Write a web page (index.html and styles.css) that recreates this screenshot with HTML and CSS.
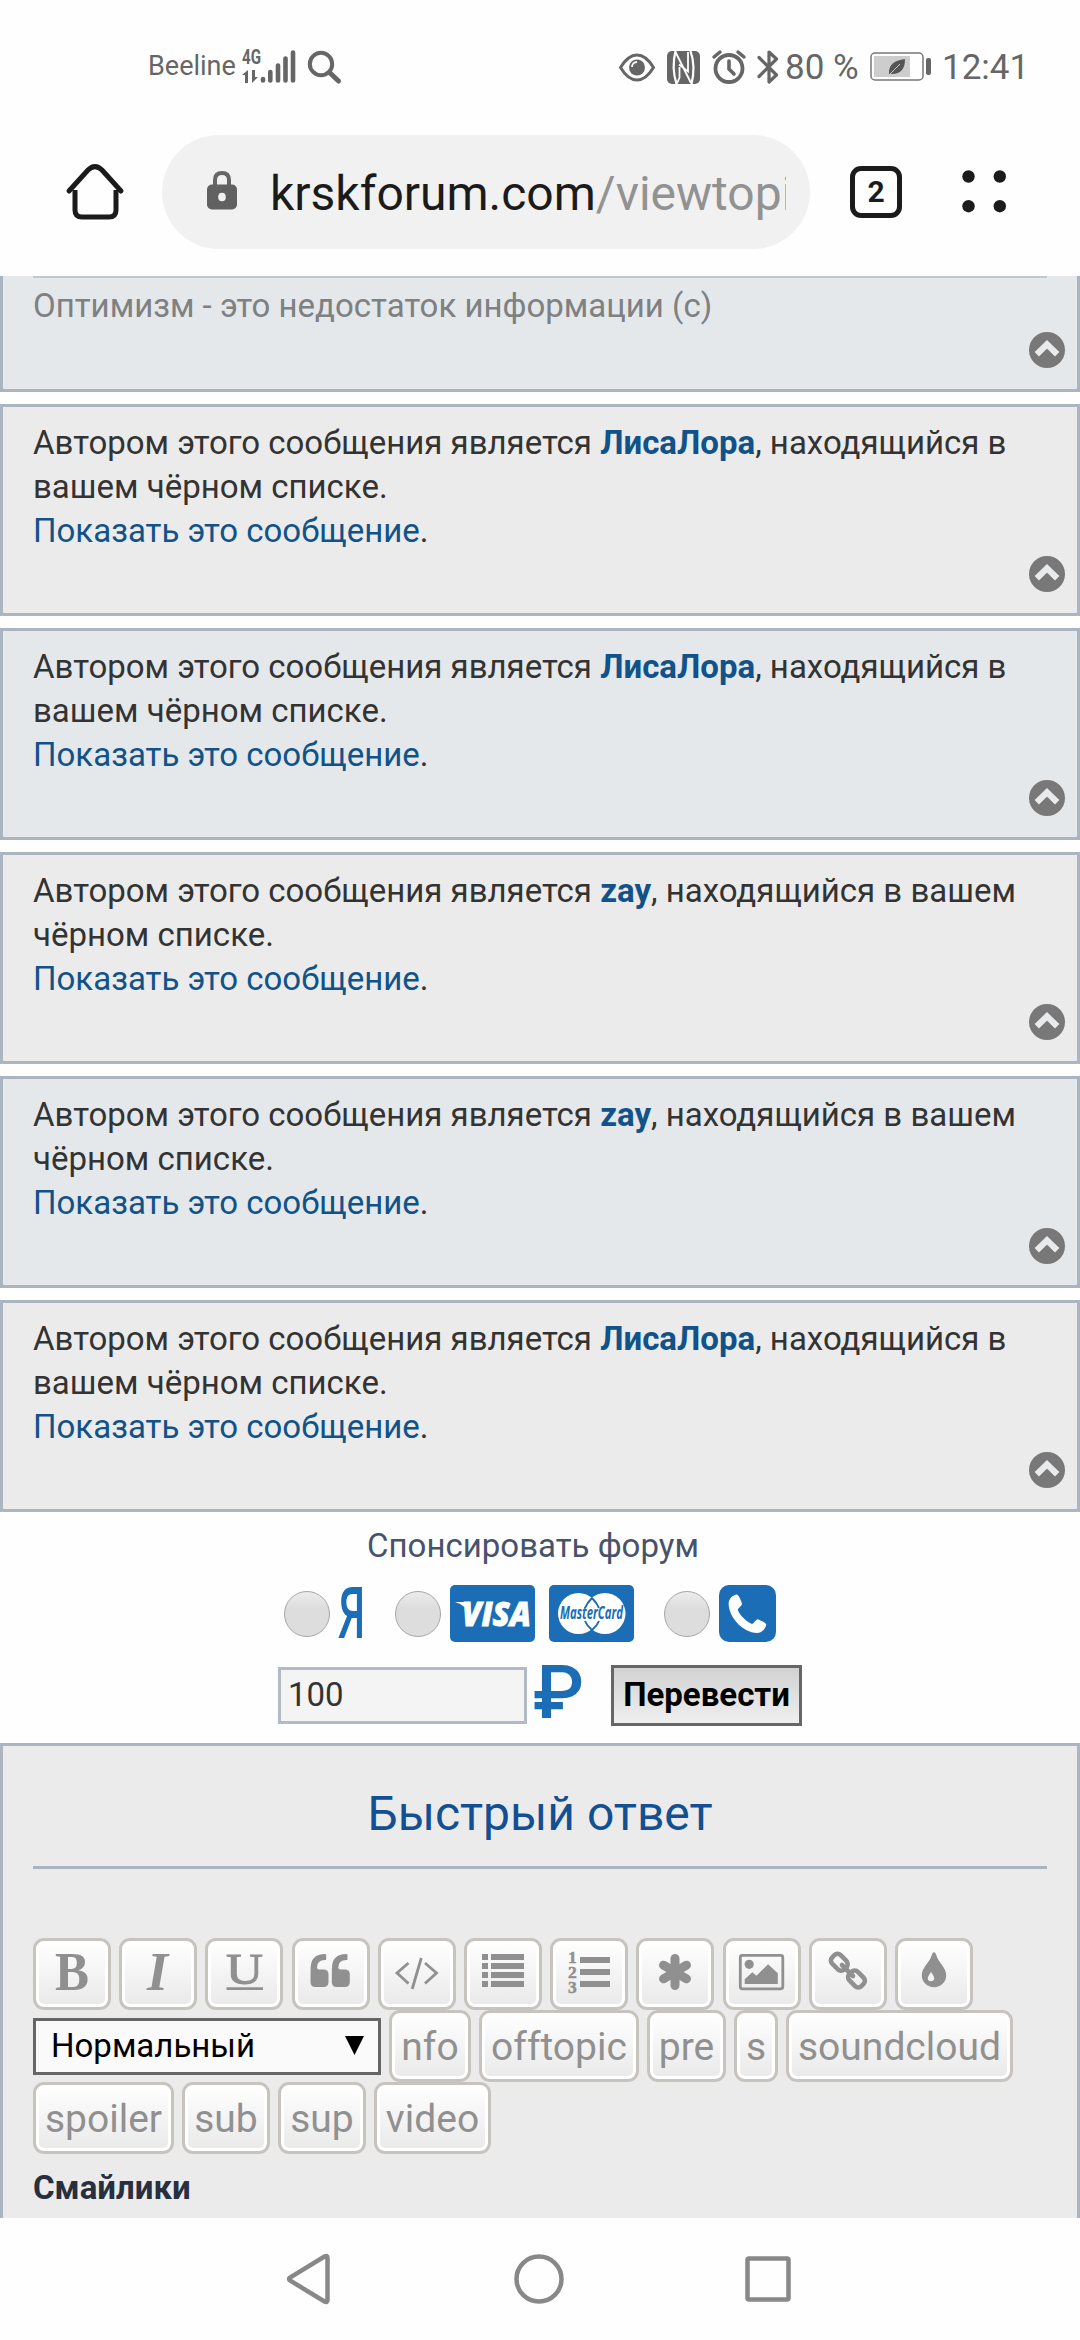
FILE: index.html
```html
<!DOCTYPE html>
<html lang="ru">
<head>
<meta charset="utf-8">
<title>krskforum.com</title>
<link rel="stylesheet" href="styles.css">
</head>
<body>
<div class="screen">
  <header class="status">
    <span class="carrier">Beeline</span>
    <svg class="signal" width="54" height="36" viewBox="0 0 54 36" fill="#666">
      <text x="0" y="15" class="net" textLength="19" lengthAdjust="spacingAndGlyphs">4G</text>
      <path d="M0 26l6-5v13H3v-8zM16 28l-6 6V21h3v7z"/>
      <g stroke="#666" stroke-width="4.6" stroke-linecap="round"><path d="M21 30v1.500M28.300 23v8.500M36 16.500v15M43.500 9.500v22M51 3.500v28"/></g>
    </svg>
    <svg class="search" width="36" height="36" viewBox="0 0 36 36" fill="none" stroke="#666"><circle cx="14" cy="15" r="11.200" stroke-width="4"/><path d="M22.500 23.500l9 8.500" stroke-width="5" stroke-linecap="round"/></svg>
    <div class="status-right">
      <svg class="eye" width="36" height="36" viewBox="0 0 36 36"><path d="M1.500 18.500Q9 6 18 6t16.500 12.500Q27 31 18 31T1.500 18.500z" fill="none" stroke="#666" stroke-width="3"/><circle cx="18" cy="18.500" r="8" fill="#666"/><path d="M13 18a5 5 0 0 1 5-5" fill="none" stroke="#fff" stroke-width="1.800"/></svg>
      <svg class="nfc" width="33" height="36" viewBox="0 0 33 36"><rect y="2" width="33" height="33" rx="5" fill="#666"/><path d="M8.500 2C6 12 6 24 9.500 35M24.500 35C27 25 27 12 23.500 2" fill="none" stroke="#fff" stroke-width="2.200"/><path d="M8.500 3L24 34M12.500 18v10.500l-2.500 6M21 3v19.500l-9-7" fill="none" stroke="#fff" stroke-width="1.800"/></svg>
      <svg class="alarm" width="34" height="36" viewBox="0 0 34 36" fill="none" stroke="#666"><circle cx="17" cy="19.500" r="13.500" stroke-width="3.800"/><path d="M17 12v8l5 5" stroke-width="3.600" stroke-linecap="round"/><path d="M2 8l6-5M32 8l-6-5" stroke-width="3.500" stroke-linecap="round"/></svg>
      <svg class="bt" width="22" height="36" viewBox="0 0 22 36" fill="none" stroke="#666" stroke-width="3.200" stroke-linecap="round" stroke-linejoin="round"><path d="M2 8.500L19.500 26 12 33V3l7.500 7L2 27.500"/></svg>
      <span class="level">80 %</span>
      <svg class="battery" width="62" height="30" viewBox="0 0 62 30"><rect x="1" y="1" width="52" height="27" rx="4" fill="none" stroke="#777" stroke-width="1.500"/><rect x="4" y="4" width="36" height="21" fill="#cdcdcd"/><path d="M19 22Q18 9 35 7q0 15-13 15z" fill="#555"/><path d="M18 24Q25 17 30 12" stroke="#cdcdcd" fill="none"/><rect x="56" y="6" width="5" height="17" rx="2" fill="#666"/></svg>
      <span class="clock">12:41</span>
    </div>
  </header>

  <nav class="browser">
    <svg class="home" width="60" height="60" viewBox="0 0 60 60" fill="none" stroke="#1b1b1b" stroke-width="5"><path d="M3 29L22 8q7-7 14 0l19 21" stroke-linecap="round"/><path d="M9 28v20q0 7 7 7h27q7 0 7-7V28"/></svg>
    <div class="omnibox">
      <svg class="lock" width="30" height="40" viewBox="0 0 30 40"><path d="M8 16v-6q0-7 7-7t7 7v6" fill="none" stroke="#666" stroke-width="4"/><rect y="14.500" width="30" height="25" rx="5" fill="#616161"/><ellipse cx="15" cy="27" rx="3.800" ry="4.300" fill="#f1f1f1"/></svg>
      <div class="url">krskforum.com<span class="path">/viewtopi</span></div>
    </div>
    <div class="tabs">2</div>
    <svg class="menu" width="45" height="43" viewBox="0 0 45 43" fill="#1b1b1b"><circle cx="6.500" cy="6.500" r="6.200"/><circle cx="37.800" cy="6.500" r="6.200"/><circle cx="6.500" cy="36.200" r="6.200"/><circle cx="37.800" cy="36.200" r="6.200"/></svg>
  </nav>

  <main class="page">
    <article class="post alt first"><p class="signature">Оптимизм - это недостаток информации (с)</p><svg class="up" viewBox="0 0 36 36"><use href="#up"/></svg></article>
    <article class="post"><p>Автором этого сообщения является <b>ЛисаЛора</b>, находящийся в<br>вашем чёрном списке.<br><a>Показать это сообщение</a>.</p><svg class="up" viewBox="0 0 36 36"><use href="#up"/></svg></article>
    <article class="post alt"><p>Автором этого сообщения является <b>ЛисаЛора</b>, находящийся в<br>вашем чёрном списке.<br><a>Показать это сообщение</a>.</p><svg class="up" viewBox="0 0 36 36"><use href="#up"/></svg></article>
    <article class="post"><p>Автором этого сообщения является <b>zay</b>, находящийся в вашем<br>чёрном списке.<br><a>Показать это сообщение</a>.</p><svg class="up" viewBox="0 0 36 36"><use href="#up"/></svg></article>
    <article class="post alt"><p>Автором этого сообщения является <b>zay</b>, находящийся в вашем<br>чёрном списке.<br><a>Показать это сообщение</a>.</p><svg class="up" viewBox="0 0 36 36"><use href="#up"/></svg></article>
    <article class="post"><p>Автором этого сообщения является <b>ЛисаЛора</b>, находящийся в<br>вашем чёрном списке.<br><a>Показать это сообщение</a>.</p><svg class="up" viewBox="0 0 36 36"><use href="#up"/></svg></article>

    <section class="sponsor">
      <div class="sponsor-title">Спонсировать форум</div>
      <div class="methods">
        <i class="radio"></i>
        <svg class="yandex" width="26" height="57" viewBox="0 0 26 57"><text x="-1" y="52.500" textLength="28" lengthAdjust="spacingAndGlyphs">Я</text></svg>
        <i class="radio"></i>
        <svg class="visa" width="85" height="57" viewBox="0 0 85 57"><rect width="85" height="57" rx="5" fill="#1b6db5"/><path d="M5 17h10q4 1 5 8l3 9Q17 20 5 17z" fill="#fff"/><text x="12" y="41" textLength="69" lengthAdjust="spacingAndGlyphs">VISA</text></svg>
        <svg class="mc" width="85" height="57" viewBox="0 0 85 57"><rect width="85" height="57" rx="5" fill="#1b6db5"/><circle cx="29.500" cy="28.500" r="20.500" fill="#fff"/><circle cx="56" cy="28.500" r="20.500" fill="#fff"/><path d="M43 13q-5 5-7 10M43 13q5 5 7 10M36 36q2 5 7 9M50 36q-2 5-7 9" fill="none" stroke="#1b6db5" stroke-width="2"/><text x="11" y="34" textLength="63" lengthAdjust="spacingAndGlyphs">MasterCard</text></svg>
        <i class="radio"></i>
        <svg class="phone" width="57" height="57" viewBox="0 0 57 57"><rect width="57" height="57" rx="10" fill="#1b6db5"/><path d="M17.500 9.500C13 10.500 10 13.500 9.600 18.500 10 33 24 47.500 38 48 43 47.500 46.500 44 47.300 39.500 47.300 38.500 46 37.500 39 34.300 37 34 34.500 39 33 39 28 37.500 20 29.500 18.800 24.800 18.800 23.500 23.500 20.500 23 18.500 21 13 19.500 9.500 17.500 9.500z" fill="#fff"/></svg>
      </div>
      <div class="pay">
        <div class="amount">100</div>
        <svg class="rub" width="48" height="57" viewBox="0 0 48 57"><text x="-2" y="51" textLength="51" lengthAdjust="spacingAndGlyphs">₽</text></svg>
        <div class="submit">Перевести</div>
      </div>
    </section>

    <section class="reply">
      <h2>Быстрый ответ</h2>
      <div class="row icons">
        <span class="btn"><svg viewBox="3 3 72 66"><text class="serif bold" x="22" y="52" font-size="54" textLength="34" lengthAdjust="spacingAndGlyphs">B</text></svg></span>
        <span class="btn"><svg viewBox="3 3 72 66"><text class="serif bold ital" x="28" y="52" font-size="54">I</text></svg></span>
        <span class="btn"><svg viewBox="3 3 72 66"><text class="serif" x="21" y="45.500" font-size="45" stroke="#909090" textLength="37" lengthAdjust="spacingAndGlyphs">U</text><path d="M21.500 49.300h36.500v2.800H21.500z"/></svg></span>
        <span class="btn"><svg viewBox="3 3 72 66"><path id="q" d="M18.600 30.500Q18.600 16 33 16q1.200 0 1.200 1.200v3.700q0 1.200-1.200 1.200-8 0-8 7.500 0 2 2 2h4.500q5 0 5 5V44q0 5-5 5h-8q-5 0-5-5z"/><use href="#q" x="21.300"/></svg></span>
        <span class="btn"><svg viewBox="3 3 72 66" fill="none"><path d="M30.500 25L19 35l11.500 10.500M47 25l11.500 10L47 45.500M43.300 20L34.200 51" fill="none" stroke="#909090" stroke-width="2.800"/></svg></span>
        <span class="btn"><svg viewBox="3 3 72 66"><path d="M18 16h6v6h-6zM18 25h6v6h-6zM18 34h6v6h-6zM18 43h6v6h-6zM27 16h33v6H27zM27 25h33v6H27zM27 34h33v6H27zM27 43h33v6H27z"/></svg></span>
        <span class="btn"><svg viewBox="3 3 72 66"><path d="M30 19h30v6H30zM30 31h30v6H30zM30 43h30v6H30z"/><g class="serif bold" font-size="17.500" stroke="#909090" stroke-width=".5"><text x="18" y="25">1</text><text x="18" y="39.700">2</text><text x="18" y="54.500">3</text></g></svg></span>
        <span class="btn"><svg viewBox="3 3 72 66"><path d="M39 20.500v27M27.500 27.200l23 13.600M50.500 27.200l-23 13.600" stroke="#909090" stroke-width="9" stroke-linecap="round"/></svg></span>
        <span class="btn"><svg viewBox="3 3 72 66"><rect x="17.300" y="17.300" width="42.500" height="33.500" rx="2" fill="none" stroke="#909090" stroke-width="2.800"/><circle cx="26.200" cy="26.300" r="4.600"/><path d="M21.700 46v-4.700l7.600-7 4.100 3.400 11.700-11.400 9.700 9V46z"/></svg></span>
        <span class="btn"><svg viewBox="3 3 72 66"><g fill="none" stroke="#909090" stroke-width="4.600"><rect x="-8.500" y="-6" width="17" height="12" rx="4.500" transform="translate(30.300 24.300) rotate(45)"/><rect x="-8.500" y="-6" width="17" height="12" rx="4.500" transform="translate(47.500 41) rotate(45)"/><path d="M33 27l11 11" stroke-linecap="round"/></g></svg></span>
        <span class="btn"><svg viewBox="3 3 72 66"><path d="M39 14.300q1.500 0 2 2C43.500 25.500 51.200 29 51.200 37.500a12.200 11.700 0 0 1-24.400 0C26.800 29 34.500 25.500 37 16.300q.5-2 2-2z"/><path d="M36 34q3.200 4.500 3.200 6.200a3.200 3 0 0 1-6.400 0Q32.800 38.500 36 34z" fill="#f3f3f3"/></svg></span>
      </div>
      <div class="row tags">
        <span class="select">Нормальный<svg width="19" height="19" viewBox="0 0 19 19"><path d="M0 0h19L9.500 19z"/></svg></span>
        <span class="btn w-nfo">nfo</span><span class="btn w-off">offtopic</span><span class="btn w-pre">pre</span><span class="btn w-s">s</span><span class="btn w-sound">soundcloud</span>
      </div>
      <div class="row tags"><span class="btn w-spoiler">spoiler</span><span class="btn w-sub">sub</span><span class="btn w-sub">sup</span><span class="btn w-video">video</span></div>
      <div class="smilies">Смайлики</div>
    </section>
  </main>

  <footer class="navbar">
    <svg width="50" height="54" viewBox="0 0 50 54"><path d="M42.500 6v42q0 3-3 1.500L5 28.500q-2-1.500 0-3L39.500 4.500q3-1.500 3 1.500z"/></svg>
    <svg width="54" height="54" viewBox="0 0 54 54"><circle cx="27" cy="27" r="22.500"/></svg>
    <svg width="54" height="54" viewBox="0 0 54 54"><rect x="6.500" y="6.500" width="41" height="41" rx="1.500"/></svg>
  </footer>
</div>
<svg class="defs" width="0" height="0"><symbol id="up" viewBox="0 0 36 36"><circle cx="18" cy="18" r="18" fill="#787878"/><path d="M7.800 22.300L18 12.300l10.200 10" fill="none" stroke="#e8eaeb" stroke-width="6.200"/></symbol></svg>
</body>
</html>
```
FILE: styles.css
```css
* { box-sizing: border-box; }
body { margin: 0; background: #fefefe; font-family: Roboto, sans-serif; }
svg { display: block; flex: none; overflow: visible; }
.defs { display: none; }
.screen { width: 1080px; height: 2340px; display: flex; flex-direction: column; overflow: hidden; }

.status { height: 135px; padding: 49px 51px 0 148px; display: flex; align-items: flex-start; color: #666; white-space: nowrap; }
.carrier { width: 94px; font-size: 27px; line-height: 35px; }
.net { font-size: 20px; font-weight: 700; }
.search { margin-left: 11px; }
.status-right { flex: 1; display: flex; justify-content: flex-end; }
.nfc { margin-left: 12px; }
.alarm { margin-left: 12px; }
.bt { margin-left: 11px; }
.level { width: 86px; margin-left: 6px; font-size: 35px; line-height: 38px; }
.battery { margin: 3px 0 0 -1px; }
.clock { width: 87px; margin-left: 10px; font-size: 35px; line-height: 38px; }

.browser { height: 141px; display: flex; align-items: flex-start; padding-left: 66px; }
.home { margin-top: 27px; }
.omnibox { width: 648px; height: 114px; margin-left: 36px; padding: 0 24px 0 45px; border-radius: 57px; background: #f1f1f1; display: flex; align-items: center; }
.lock { margin-top: -4px; }
.url { flex: 1; margin: 3px 0 0 33px; overflow: hidden; white-space: nowrap; font-size: 48px; line-height: 60px; color: #1b1b1b; }
.path { color: #929292; }
.tabs { width: 52px; height: 52px; margin: 31px 0 0 40px; border: 5px solid #1b1b1b; border-radius: 11px; font-size: 30px; font-weight: 700; line-height: 42px; text-align: center; color: #1b1b1b; }
.menu { margin: 35px 0 0 60px; }

.page { height: 1942px; overflow: hidden; }
.post { position: relative; height: 212px; margin-bottom: 12px; padding: 14px 30px 0; border: 3px solid #aab5bf; background: #ebebeb; font-size: 33px; line-height: 44px; color: #333; white-space: nowrap; }
.post p { margin: 0; }
.alt { background: #e4e8eb; }
.first { height: 116px; padding-top: 0; border-top: 0; }
.signature { height: 60px; padding-top: 6px; border-top: 2px solid #bfc9d1; color: #7e8082; }
.post a, .post b { color: #105289; }
.up { position: absolute; right: 12px; bottom: 21px; width: 36px; height: 36px; }

.sponsor { height: 219px; font-size: 33px; color: #333; }
.sponsor-title { height: 61px; padding-right: 14px; line-height: 44px; text-align: center; color: #47536b; }
.methods { display: flex; height: 57px; padding-left: 284px; }
.radio { width: 46px; height: 46px; margin-top: 6px; border: 1px solid #a6a6a6; border-radius: 50%; background: linear-gradient(#ececec, #dcdcdc 40%, #dedede); }
.yandex { margin: 0 30px 0 9px; }
.yandex text { font-size: 70px; font-weight: 600; fill: #1b6db5; font-family: "Open Sans", sans-serif; }
.visa { margin-left: 9px; }
.visa text { font: italic 800 34px "Open Sans", sans-serif; fill: #fff; stroke: #fff; stroke-width: .8px; }
.mc { margin: 0 30px 0 14px; }
.mc text { font: italic 700 17px "Open Sans", sans-serif; fill: #1b6db5; }
.phone { margin-left: 9px; }
.pay { display: flex; align-items: center; height: 61px; margin-top: 23px; padding-left: 278px; }
.amount { width: 249px; height: 57px; padding-left: 7px; border: 3px solid #b4bac3; background: #f4f4f4; line-height: 50px; }
.rub { margin: 0 28px 0 8px; }
.rub text { font-size: 74px; font-weight: 500; fill: #1b6db5; }
.submit { width: 191px; height: 61px; border: 3px solid #666; background: linear-gradient(#d2d2d2, #efefef); line-height: 54px; font-weight: 700; text-align: center; color: #000; }

.reply { height: 600px; padding: 0 30px; border: 3px solid #aab5bf; background: #ebebeb; }
.reply h2 { height: 123px; margin: 0 0 69px; padding-top: 38px; border-bottom: 3px solid #aab5bf; font-size: 48px; font-weight: 400; line-height: 60px; text-align: center; color: #124f93; }
.row { display: flex; height: 72px; gap: 8px; align-items: center; }
.icons { gap: 8.200px; }
.btn { flex: none; width: 78px; height: 72px; border: 3px solid #c7c3bf; border-radius: 11px; background: linear-gradient(#fff, #e9e9e9); box-shadow: inset 0 0 0 3px #fff; font-size: 39px; line-height: 68px; text-align: center; color: #909090; }
.btn svg { width: 72px; height: 66px; fill: #909090; }
.serif { font-family: "Liberation Serif", serif; }
.bold { font-weight: 700; }
.ital { font-style: italic; }
.select { display: flex; align-items: center; justify-content: space-between; width: 348px; height: 57px; padding: 0 14px 2px 15px; border: 3px solid #666; background: #fafafa; font-size: 33px; color: #000; }
.w-nfo { width: 82px; }
.w-off { width: 160px; }
.w-pre { width: 79px; }
.w-s { width: 44px; }
.w-sound { width: 227px; }
.w-spoiler { width: 141px; }
.w-sub { width: 88px; }
.w-video { width: 117px; }
.smilies { margin-top: 12px; font-size: 33px; font-weight: 700; line-height: 44px; color: #28303f; }

.navbar { flex: 1; display: flex; gap: 177px; padding: 34px 0 0 285px; }
.navbar svg { fill: none; stroke: #888; stroke-width: 4.500; }
.navbar svg + svg + svg { margin-left: -2px; }
```
